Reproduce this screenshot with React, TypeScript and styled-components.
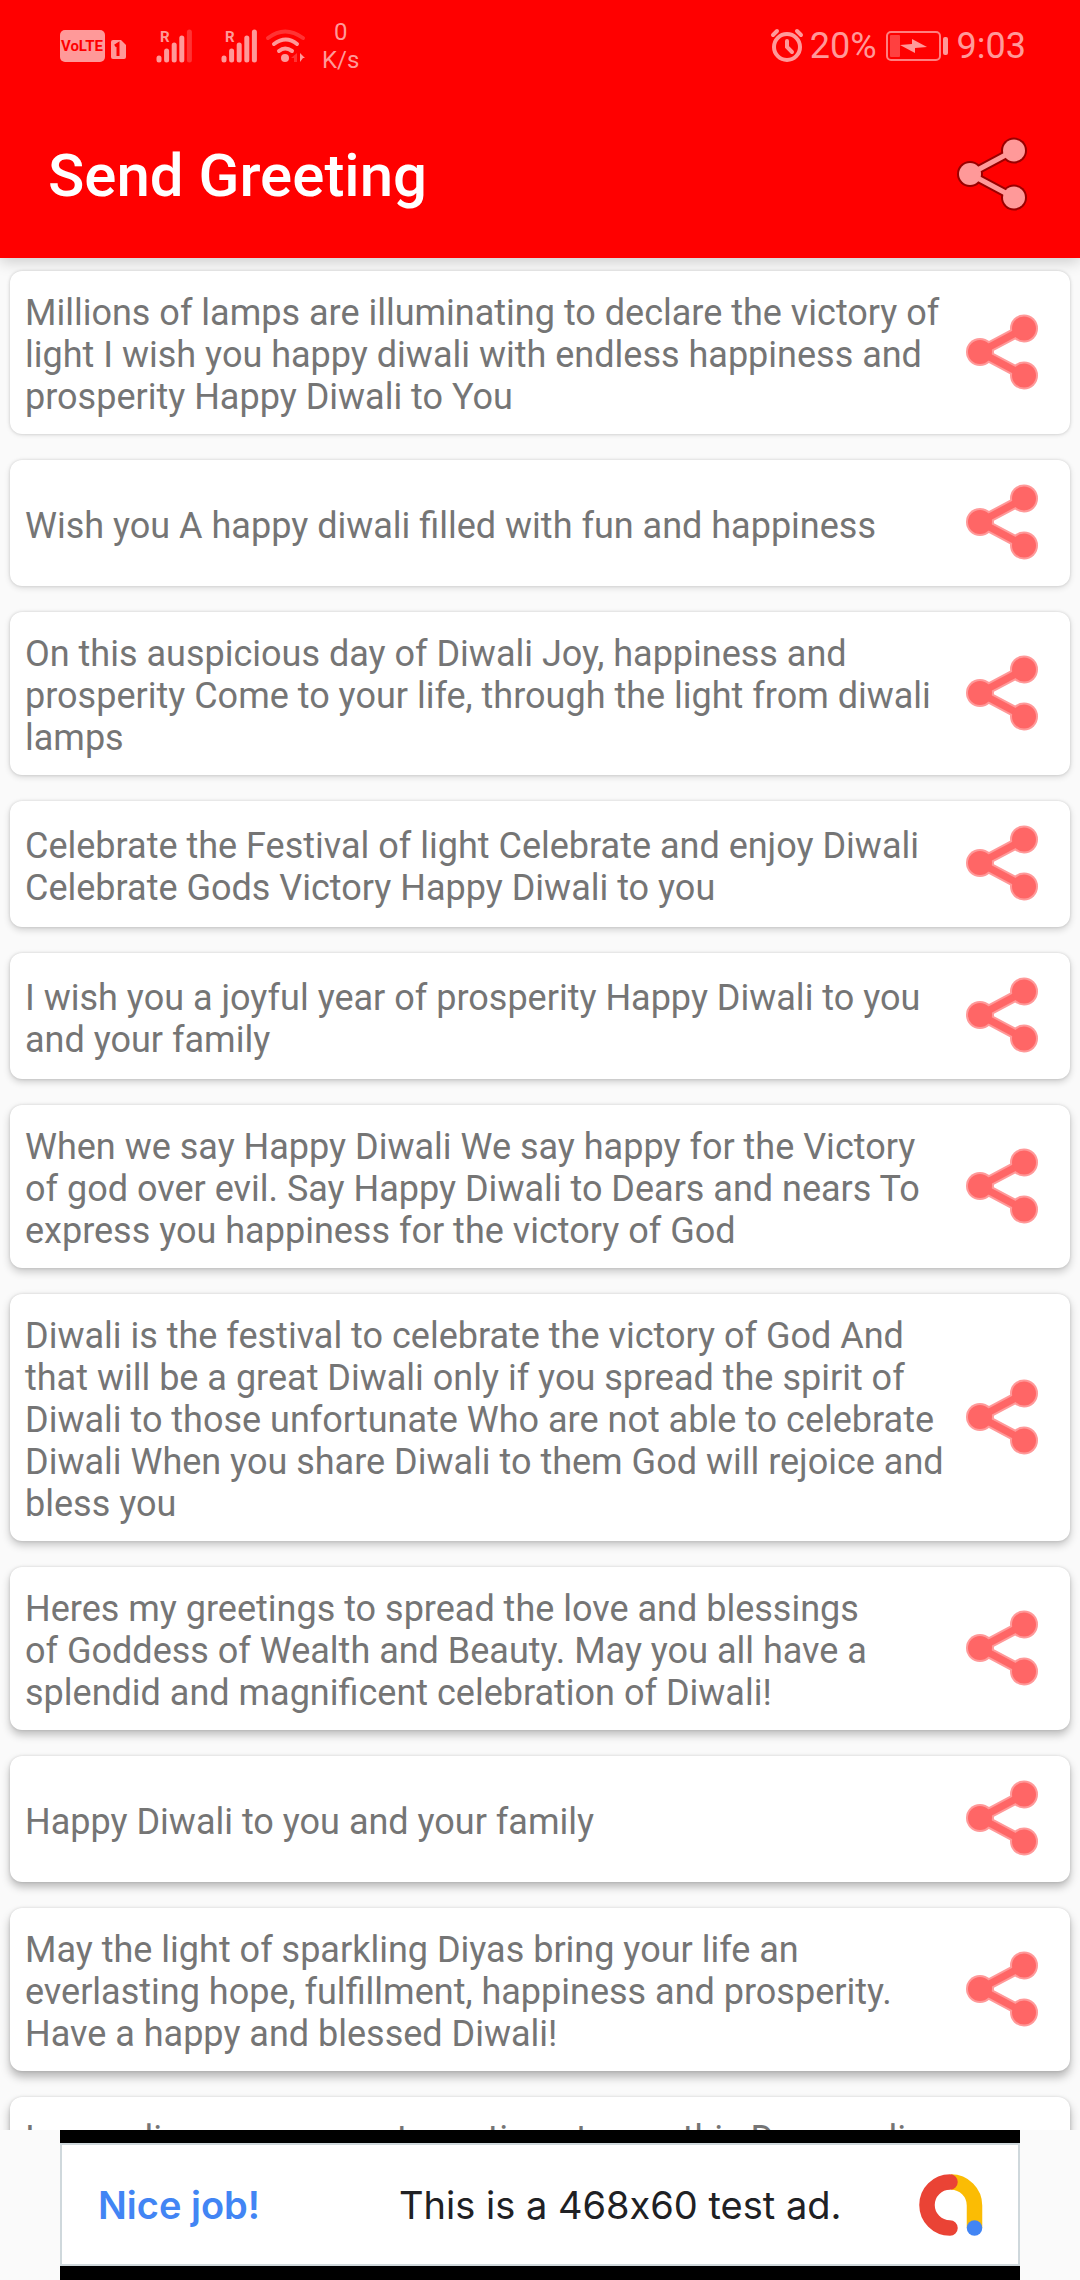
import React from "react";
import styled, { createGlobalStyle } from "styled-components";

const GlobalStyle = createGlobalStyle`
  *, *::before, *::after { box-sizing: border-box; }
  html, body { margin: 0; padding: 0; background: #fafafa; }
  body { font-family: Roboto, "Noto Sans", sans-serif; }
`;

const Screen = styled.div`
  display: flex;
  flex-direction: column;
  height: 100vh;
  overflow: hidden;
  background: #fafafa;
`;

const Header = styled.header`
  flex: none;
  background: #ff0000;
  box-shadow: 0 4px 14px rgba(0, 0, 0, 0.18);
`;

const StatusBar = styled.div`
  display: flex;
  align-items: center;
  justify-content: space-between;
  height: 92px;
  padding: 0 54px 0 59px;
  color: #ff9999;
`;

const StatusGroup = styled.div<{ $gap: number }>`
  display: flex;
  align-items: center;
  gap: ${(p) => p.$gap}px;
`;

const StatusText = styled.span`
  font-size: 36px;
  line-height: 42px;
`;

const NetworkSpeed = styled.span`
  font-size: 24px;
  line-height: 28px;
  text-align: center;
`;

const Glyph = styled.svg`
  display: block;
  flex: none;
  overflow: visible;
`;

const GlyphLabel = styled.text`
  font-family: Roboto, sans-serif;
  font-weight: 700;
`;

const Toolbar = styled.div`
  display: flex;
  align-items: center;
  justify-content: space-between;
  height: 166px;
  padding: 0 51px 0 48px;
`;

const Title = styled.h1`
  margin: 0;
  padding-top: 2px;
  color: #ffffff;
  font-size: 60px;
  font-weight: 500;
  line-height: 70px;
`;

const IconButton = styled.button`
  display: flex;
  flex: none;
  padding: 0 0 2px;
  border: 0;
  background: transparent;
  cursor: pointer;
`;

const List = styled.ul`
  flex: 1;
  min-height: 0;
  margin: 0;
  padding: 13px 10px;
  overflow: hidden;
  list-style: none;
  display: flex;
  flex-direction: column;
  gap: 26px;
`;

const Card = styled.li<{ $depth: number }>`
  display: flex;
  flex: none;
  align-items: center;
  min-height: 126px;
  padding: 0 31px 0 15px;
  border-radius: 12px;
  background: #ffffff;
  box-shadow: 0 0 3px rgba(0, 0, 0, 0.14),
    0 ${(p) => 1 + Math.round(p.$depth / 2)}px ${(p) => 5 + Math.round(p.$depth / 2)}px
      rgba(0, 0, 0, ${(p) => 0.1 + p.$depth * 0.02});
`;

const Message = styled.p`
  flex: 1;
  margin: 0;
  padding: 21px 12px 16px 0;
  color: #757575;
  font-size: 36px;
  line-height: 42px;
  white-space: pre-line;
`;

const AdArea = styled.footer`
  display: flex;
  flex: none;
  justify-content: center;
  background: #fafafa;
`;

const AdFrame = styled.div`
  width: 100%;
  max-width: 960px;
  padding: 13px 0 14px;
  background: #000000;
`;

const Ad = styled.a`
  display: flex;
  align-items: center;
  height: 123px;
  padding: 0 36px;
  border: 2px solid #cfd8dc;
  background: #ffffff;
  font-family: Inter, Roboto, sans-serif;
  font-size: 38px;
  font-feature-settings: "calt" 0;
  line-height: 46px;
  color: #202124;
  text-decoration: none;
`;

const AdHeadline = styled.strong`
  flex: none;
  width: 301px;
  color: #4285f4;
  font-weight: 600;
`;

const AdText = styled.span`
  flex: 1;
`;

type ShareColors = { fill: string; outline: string; nodeRadius: number; bar: number };

const ShareGlyph = ({ fill, outline, nodeRadius, bar }: ShareColors) => {
  const layer = (color: string, grow: number) => (
    <g fill={color}>
      <path
        d="M59 16.5 15 40 59 63.5"
        fill="none"
        stroke={color}
        strokeWidth={bar + grow * 2}
      />
      <circle cx="15" cy="40" r={nodeRadius + grow} />
      <circle cx="59" cy="16.5" r={nodeRadius + grow} />
      <circle cx="59" cy="63.5" r={nodeRadius + grow} />
    </g>
  );
  return (
    <Glyph width="74" height="80" viewBox="0 0 74 80" aria-hidden="true">
      {layer(outline, 2)}
      {layer(fill, 0)}
    </Glyph>
  );
};

const VolteIcon = () => (
  <Glyph width="68" height="34" viewBox="0 0 68 34" role="img" aria-label="VoLTE SIM 1">
    <rect x="1" y="1" width="45" height="32" rx="5" fill="#ff9999" />
    <GlyphLabel x="23" y="22" fontSize="15" textAnchor="middle" fill="#ff0000">
      VoLTE
    </GlyphLabel>
    <path d="M54 11h8l5 5v12a2 2 0 0 1-2 2H54a2 2 0 0 1-2-2V13a2 2 0 0 1 2-2z" fill="#ff9999" />
    <path d="M56 17l3-2v12" fill="none" stroke="#ff0000" strokeWidth="3" />
  </Glyph>
);

const SignalIcon = ({ level }: { level: number }) => (
  <Glyph width="36" height="34" viewBox="0 0 36 34" role="img" aria-label="Signal strength">
    <GlyphLabel x="4" y="13" fontSize="15" fill="#ff9999">
      R
    </GlyphLabel>
    {[27, 20, 14, 7, 1].map((top, i) => (
      <path
        key={top}
        d={`M${3 + i * 7.6} ${top + 2}V31`}
        stroke={i < level ? "#ff9999" : "#ff3333"}
        strokeWidth="5"
        strokeLinecap="round"
      />
    ))}
  </Glyph>
);

const WifiIcon = () => (
  <Glyph width="40" height="34" viewBox="0 0 40 34" role="img" aria-label="Wi-Fi">
    <g fill="none" strokeWidth="4" strokeLinecap="round">
      <path d="M2 9q17-13 35 0" stroke="#ff3333" />
      <path d="M8 15q12-9 23 0" stroke="#ff9999" />
      <path d="M13 22q6-5 13 0" stroke="#ff9999" />
    </g>
    <circle cx="19" cy="29" r="4" fill="#ff9999" />
    <path d="M31 24v9h-3v-4h-3z" fill="#ff3333" />
    <path d="M34 33v-9l5 5h-2l-3 4z" fill="#ff9999" />
  </Glyph>
);

const AlarmIcon = () => (
  <Glyph width="34" height="34" viewBox="0 0 34 34" role="img" aria-label="Alarm set">
    <g fill="none" stroke="#ff9999" strokeWidth="4" strokeLinecap="round">
      <circle cx="17" cy="18" r="13" />
      <path d="M17 12v6l5 5" />
      <path d="M3 6l4-4M31 6l-4-4" />
    </g>
  </Glyph>
);

const BatteryIcon = () => (
  <Glyph width="62" height="30" viewBox="0 0 62 30" role="img" aria-label="Battery charging">
    <rect x="1" y="1" width="53" height="28" rx="4" fill="none" stroke="#ff7f7f" strokeWidth="2" />
    <rect x="4" y="4" width="10" height="22" rx="1" fill="#ff4040" />
    <path d="M14 14l12-1V8l15 8-12 1v5z" fill="#ff9999" />
    <rect x="57" y="6" width="5" height="18" rx="2" fill="#ff9999" />
  </Glyph>
);

const AdMobLogo = () => (
  <Glyph width="62" height="62" viewBox="0 0 62 62" aria-hidden="true">
    <g fill="none" strokeWidth="15.5">
      <path d="M31 8A23.500 23.500 0 0 1 54.500 31.500V54" stroke="#fbbc04" />
      <path d="M30 8A23 23 0 0 0 30 54" stroke="#ea4335" strokeLinecap="round" />
    </g>
    <circle cx="54.5" cy="54" r="7.75" fill="#4285f4" />
  </Glyph>
);

const greetings = [
  "Millions of lamps are illuminating to declare the victory of light I wish you happy diwali with endless happiness and prosperity Happy Diwali to You",
  "Wish you A happy diwali filled with fun and happiness",
  "On this auspicious day of Diwali Joy, happiness and prosperity Come to your life, through the light from diwali lamps",
  "Celebrate the Festival of light Celebrate and enjoy Diwali Celebrate Gods Victory Happy Diwali to you",
  "I wish you a joyful year of prosperity Happy Diwali to you and your family",
  "When we say Happy Diwali We say happy for the Victory of god over evil. Say Happy Diwali to Dears and nears To express you happiness for the victory of God",
  "Diwali is the festival to celebrate the victory of God And that will be a great Diwali only if you spread the spirit of Diwali to those unfortunate Who are not able to celebrate Diwali When you share Diwali to them God will rejoice and bless you",
  "Heres my greetings to spread the love and blessings\nof Goddess of Wealth and Beauty. May you all have a splendid and magnificent celebration of Diwali!",
  "Happy Diwali to you and your family",
  "May the light of sparkling Diyas bring your life an everlasting hope, fulfillment, happiness and prosperity. Have a happy and blessed Diwali!",
  "Im sending my warmest greetings to you this Deepavali\nMay the festival of lights bring you and your family endless joy, happiness and prosperity",
];

export default function App() {
  return (
    <Screen>
      <GlobalStyle />
      <Header>
        <StatusBar>
          <StatusGroup $gap={29}>
            <VolteIcon />
            <SignalIcon level={4} />
            <StatusGroup $gap={9}>
              <SignalIcon level={5} />
              <StatusGroup $gap={16}>
                <WifiIcon />
                <NetworkSpeed>
                  0<br />
                  K/s
                </NetworkSpeed>
              </StatusGroup>
            </StatusGroup>
          </StatusGroup>
          <StatusGroup $gap={9}>
            <StatusGroup $gap={6}>
              <AlarmIcon />
              <StatusText>20%</StatusText>
            </StatusGroup>
            <BatteryIcon />
            <StatusText>9:03</StatusText>
          </StatusGroup>
        </StatusBar>
        <Toolbar>
          <Title>Send Greeting</Title>
          <IconButton type="button" aria-label="Share app">
            <ShareGlyph fill="#ff9999" outline="#990000" nodeRadius={11} bar={5} />
          </IconButton>
        </Toolbar>
      </Header>
      <List>
        {greetings.map((text, index) => (
          <Card key={text} $depth={index}>
            <Message>{text}</Message>
            <IconButton type="button" aria-label="Share greeting">
              <ShareGlyph fill="#ff6666" outline="#ff9999" nodeRadius={12} bar={7} />
            </IconButton>
          </Card>
        ))}
      </List>
      <AdArea>
        <AdFrame>
          <Ad href="#ad">
            <AdHeadline>Nice job!</AdHeadline>
            <AdText>This is a 468x60 test ad.</AdText>
            <AdMobLogo />
          </Ad>
        </AdFrame>
      </AdArea>
    </Screen>
  );
}
